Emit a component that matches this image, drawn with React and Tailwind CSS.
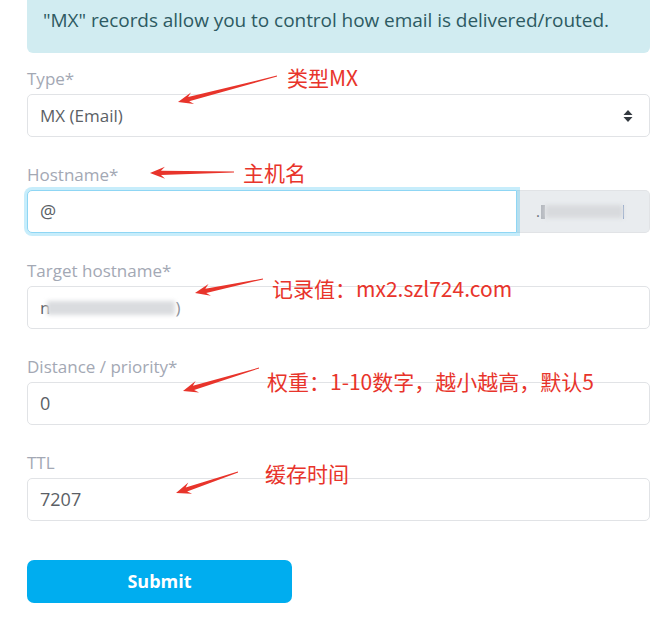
import React from "react";

function Arrow({ tip, tail }) {
  const [tx, ty] = tip;
  const [bx, by] = tail;
  const dx = tx - bx;
  const dy = ty - by;
  const len = Math.hypot(dx, dy);
  const ux = dx / len;
  const uy = dy / len;
  const nx = -uy;
  const ny = ux;
  const headLen = 15;
  const hx = tx - ux * headLen;
  const hy = ty - uy * headLen;
  const neckX = tx - ux * (headLen - 4);
  const neckY = ty - uy * (headLen - 4);
  const pts = [
    [bx + nx * 0.4, by + ny * 0.4],
    [neckX + nx * 2.2, neckY + ny * 2.2],
    [hx + nx * 6, hy + ny * 6],
    [tx, ty],
    [hx - nx * 6, hy - ny * 6],
    [neckX - nx * 2.2, neckY - ny * 2.2],
    [bx - nx * 0.4, by - ny * 0.4],
  ];
  return <polygon points={pts.map((p) => p.join(",")).join(" ")} fill="#e8342b" />;
}

function Label({ children }) {
  return (
    <div className="h-[22px] mb-[4px] text-[17px] leading-[22px] text-[#a3a8b4]">{children}</div>
  );
}

function Note({ className, children }) {
  return (
    <div
      className={`absolute text-[21px] leading-[26px] text-[#e8342b] whitespace-nowrap ${className}`}
      style={{ fontFamily: '"Noto Sans CJK SC", "Noto Sans", sans-serif' }}
    >
      {children}
    </div>
  );
}

export default function App() {
  return (
    <div className="relative w-[670px] h-[632px] bg-white overflow-hidden font-['Open_Sans',sans-serif]">
      <div className="pl-[27px] pr-[20px]">
        <div className="h-[53px] bg-[#d1ecf1] rounded-b-[6px] pt-[8px] pl-[16px] text-[19px] leading-[24px] tracking-[-0.05px] text-[#2d5a62] whitespace-nowrap">
          "MX" records allow you to control how email is delivered/routed.
        </div>

        <div className="mt-[15px]">
          <Label>Type*</Label>
          <div className="h-[43px] border border-[#e1e3e6] rounded-[5px] flex items-center justify-between pl-[12px] pr-[16px] text-[17px] text-[#5b5f66]">
            <span>MX (Email)</span>
            <svg width="10" height="14" viewBox="0 0 10 14">
              <path d="M5 1 L9.5 6 H0.5 Z" fill="#343a40" />
              <path d="M5 13 L9.5 8 H0.5 Z" fill="#343a40" />
            </svg>
          </div>
        </div>

        <div className="mt-[27px]">
          <Label>Hostname*</Label>
          <div className="h-[43px] flex">
            <div className="relative z-10 flex-1 h-full border border-[#8fd6f4] rounded-l-[5px] bg-white shadow-[0_0_0_3px_rgba(0,174,239,0.22)] flex items-center pl-[12px] text-[18px] text-[#5b5f66]">
              @
            </div>
            <div className="w-[133px] h-full bg-[#e9ecef] rounded-r-[5px] border border-l-0 border-[#e1e3e6] flex items-center pl-[19px] text-[15px] text-[#6b7078]">
              <span>.</span>
              <span className="w-[4px] h-[14px] bg-[#b5b9bf] ml-[1px] blur-[0.5px]" />
              <span className="w-[78px] h-[13px] bg-[#d8dadd] blur-[2px]" />
              <span className="w-[1px] h-[14px] bg-[#8fa6c9]" />
            </div>
          </div>
        </div>

        <div className="mt-[27px]">
          <Label>Target hostname*</Label>
          <div className="h-[43px] border border-[#e1e3e6] rounded-[5px] flex items-center pl-[12px] text-[17px] text-[#5b5f66]">
            <span>n</span>
            <span className="w-[128px] h-[14px] bg-[#dadcdf] blur-[2px] -ml-[3px]" />
            <span className="text-[#8d9198]">)</span>
          </div>
        </div>

        <div className="mt-[27px]">
          <Label>Distance / priority*</Label>
          <div className="h-[43px] border border-[#e1e3e6] rounded-[5px] flex items-center pl-[12px] text-[18px] text-[#5b5f66]">
            0
          </div>
        </div>

        <div className="mt-[27px]">
          <Label>TTL</Label>
          <div className="h-[43px] border border-[#e1e3e6] rounded-[5px] flex items-center pl-[12px] text-[18px] text-[#5b5f66]">
            7207
          </div>
        </div>

        <button className="mt-[39px] w-[265px] h-[43px] rounded-[7px] bg-[#00adef] text-white font-bold text-[18px] flex items-center justify-center">
          Submit
        </button>
      </div>

      <svg className="absolute inset-0 pointer-events-none" width="670" height="632">
        <Arrow tip={[178, 102]} tail={[277, 76]} />
        <Arrow tip={[150, 173]} tail={[234, 172]} />
        <Arrow tip={[195, 293]} tail={[263, 279]} />
        <Arrow tip={[183, 391]} tail={[259, 368]} />
        <Arrow tip={[176, 493]} tail={[238, 472]} />
      </svg>

      <Note className="left-[287px] top-[64px]">类型MX</Note>
      <Note className="left-[243px] top-[159px]">主机名</Note>
      <Note className="left-[272px] top-[275px]">记录值：mx2.szl724.com</Note>
      <Note className="left-[267px] top-[368px]">权重：1-10数字，越小越高，默认5</Note>
      <Note className="left-[265px] top-[460px]">缓存时间</Note>
    </div>
  );
}
